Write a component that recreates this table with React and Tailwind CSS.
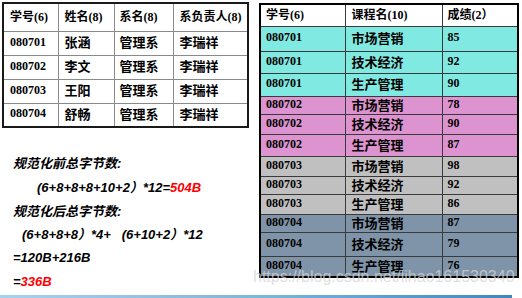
import React from "react";

const serif = { fontFamily: '"Liberation Serif", "Noto Sans CJK SC", serif' };
const sans = { fontFamily: '"Liberation Sans", "Noto Sans CJK SC", sans-serif' };

const students = [
    ["080701", "张涵"],
    ["080702", "李文"],
    ["080703", "王阳"],
    ["080704", "舒畅"],
];

const courses = ["市场营销", "技术经济", "生产管理"];
const scores = [
    { id: "080701", bg: "bg-[#80e9e1]", marks: ["85", "92", "90"], h: ["h-[25px]", "h-[22px]", "h-[23px]"] },
    { id: "080702", bg: "bg-[#dd93cf]", marks: ["78", "90", "87"], h: ["h-[18px]", "h-[20px]", "h-[22px]"] },
    { id: "080703", bg: "bg-[#c0c0c0]", marks: ["98", "92", "86"], h: ["h-[20px]", "h-[17px]", "h-[20px]"] },
    { id: "080704", bg: "bg-[#7f94a8]", marks: ["87", "79", "76"], h: ["h-[18px]", "h-[24px]", "h-[21px]"] },
];

const App = () => {
    return (
        <div className="relative w-[522px] h-[298px] overflow-hidden bg-white text-black">
            <div className="flex h-[295px] pl-[2px] pt-[2px]">
                {/* 左侧：学生表 + 字节数计算 */}
                <div className="w-[257px]">
                    <table className="w-[245px] table-fixed border-collapse border-2 border-[#1a1a1a] leading-[14px]" style={serif}>
                        <colgroup>
                            <col className="w-[55px]" />
                            <col className="w-[56px]" />
                            <col className="w-[59px]" />
                            <col className="w-[75px]" />
                        </colgroup>
                        <tbody>
                            <tr className="h-[28px] text-[12px] font-bold">
                                <td className="border border-[#8a8a8a] pl-[6px]">学号(6)</td>
                                <td className="border border-[#8a8a8a] pl-[6px]">姓名(8)</td>
                                <td className="border border-[#8a8a8a] pl-[5px]">系名(8)</td>
                                <td className="border border-[#8a8a8a] pl-[6px]">系负责人(8)</td>
                            </tr>
                            {students.map(([id, name]) => (
                                <tr key={id} className="h-[24px] font-bold">
                                    <td className="border border-[#8a8a8a] pl-[6px] pb-[3px] text-[12px]">{id}</td>
                                    <td className="border border-[#8a8a8a] pl-[6px] text-[13px]">{name}</td>
                                    <td className="border border-[#8a8a8a] pl-[5px] text-[13px]">管理系</td>
                                    <td className="border border-[#8a8a8a] pl-[6px] text-[13px]">李瑞祥</td>
                                </tr>
                            ))}
                        </tbody>
                    </table>

                    <div className="mt-[24px] pl-[11px] text-[13px] font-bold italic leading-[24px]" style={sans}>
                        <div>规范化前总字节数:</div>
                        <div className="h-[23px] pl-[24px] leading-[23px]">
                            (6+8+8+8+10+2）*12=<span className="text-[#ff0000]">504B</span>
                        </div>
                        <div className="h-[25px] leading-[25px]">规范化后总字节数:</div>
                        <div className="h-[22px] pl-[9px] leading-[22px] whitespace-pre">(6+8+8+8）*4+   (6+10+2）*12</div>
                        <div>=120B+216B</div>
                        <div>
                            =<span className="text-[#ff0000]">336B</span>
                        </div>
                    </div>
                </div>

                {/* 右侧：成绩表 */}
                <div className="pt-[1px]">
                    <table className="w-[258px] table-fixed border-collapse border-2 border-black leading-[14px]" style={serif}>
                        <colgroup>
                            <col className="w-[85px]" />
                            <col className="w-[97px]" />
                            <col className="w-[76px]" />
                        </colgroup>
                        <tbody>
                            <tr className="h-[22px] bg-white text-[12px] font-bold">
                                <td className="border border-[#3a3a3a] pl-[5px]">学号(6)</td>
                                <td className="border border-[#3a3a3a] pl-[6px]">课程名(10)</td>
                                <td className="border border-[#3a3a3a] pl-[5px]">成绩(2）</td>
                            </tr>
                            {scores.map((s) =>
                                courses.map((c, i) => (
                                    <tr key={s.id + c} className={`${s.h[i]} ${s.bg} font-bold`}>
                                        <td className="border border-[#3a3a3a] pl-[5px] pb-[3px] text-[12px]">{s.id}</td>
                                        <td className="border border-[#3a3a3a] pl-[6px] pt-[1px] text-[13px]">{c}</td>
                                        <td className="border border-[#3a3a3a] pl-[5px] pb-[3px] text-[12px]">{s.marks[i]}</td>
                                    </tr>
                                ))
                            )}
                        </tbody>
                    </table>
                </div>
            </div>

            <div className="h-[3px] w-[512px] bg-gradient-to-r from-[#a6d2ef] via-[#7db6df] to-[#3f87c0]" />

            {/* 水印 */}
            <div
                className="absolute left-[253px] top-[268px] text-[16px] leading-[18px] text-[#d4d4d4]/75 whitespace-nowrap"
                style={sans}
            >
                https://blog.csdn.net/lihao161530340
            </div>
        </div>
    );
};

export default App;
